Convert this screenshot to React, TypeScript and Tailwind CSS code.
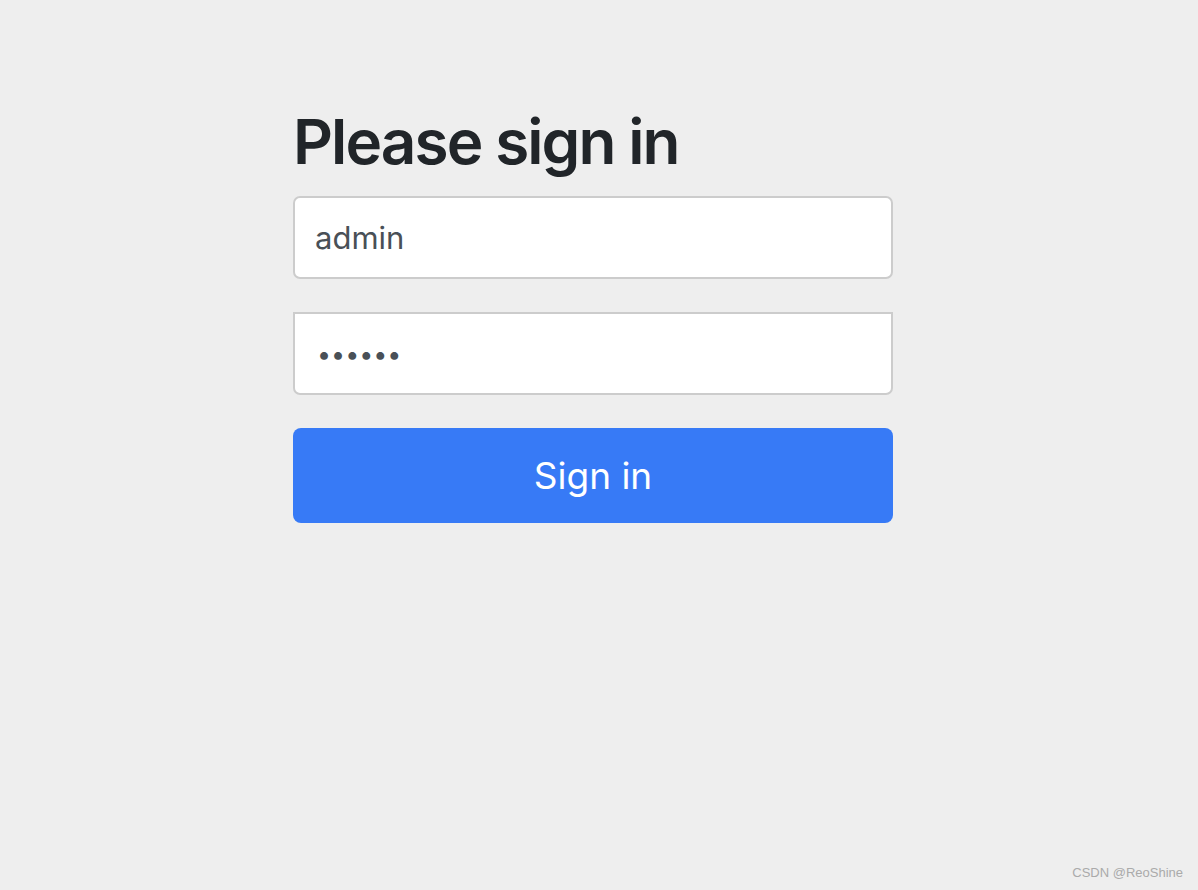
import React from 'react';

const App: React.FC = () => {
  return (
    <div className="relative min-h-[890px] w-full bg-[#eeeeee] font-['Inter','Liberation_Sans',sans-serif]">
      <form className="ml-[293px] flex w-[600px] flex-col pt-[106px]" onSubmit={e => e.preventDefault()}>
        <h2 className="mb-[18px] text-[62px] font-semibold leading-[72px] tracking-[-1.9px] text-[#212529]">
          Please sign in
        </h2>
        <input
          type="text"
          defaultValue="admin"
          className="h-[83px] w-full rounded-[7px] border-2 border-[#cccccc] bg-white px-[20px] text-[31px] text-[#495057] outline-none"
        />
        <input
          type="password"
          defaultValue="123456"
          className="mt-[33px] h-[83px] w-full rounded-b-[7px] border-2 border-[#cccccc] bg-white px-[22px] text-[25px] text-[#495057] outline-none"
        />
        <button
          type="submit"
          className="mt-[33px] h-[95px] w-full rounded-[8px] bg-[#377af6] text-[37px] text-white"
        >
          Sign in
        </button>
      </form>
      <div className="absolute bottom-[8px] right-[15px] font-['Liberation_Sans',sans-serif] text-[13px] text-[#aaaaaa]">
        CSDN @ReoShine
      </div>
    </div>
  );
};

export default App;
